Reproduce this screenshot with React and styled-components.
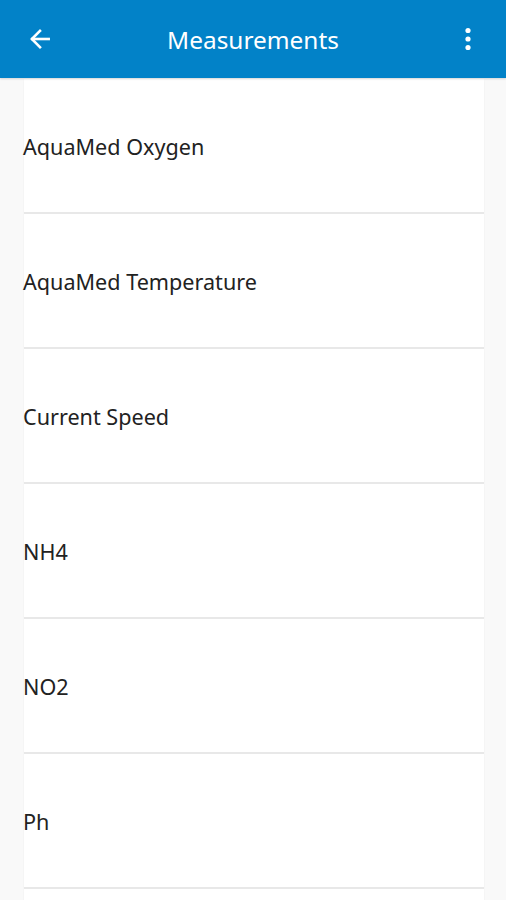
import React from "react";
import styled, { createGlobalStyle } from "styled-components";

const GlobalStyle = createGlobalStyle`
  body {
    margin: 0;
    background: #f9f9f9;
    font-family: "Noto Sans", "Open Sans", sans-serif;
  }
`;

const Page = styled.div`
  width: 506px;
  height: 900px;
  overflow: hidden;
  background: #f9f9f9;
`;

const Toolbar = styled.div`
  height: 78px;
  background: #0282c8;
  display: flex;
  align-items: center;
  padding: 0 24px 0 26px;
  box-sizing: border-box;
  box-shadow: 0 1px 2px rgba(0, 0, 0, 0.15);
  position: relative;
`;

const IconButton = styled.div`
  width: 28px;
  height: 28px;
  display: flex;
  align-items: center;
  justify-content: center;
`;

const Title = styled.h1`
  flex: 1;
  margin: 0;
  text-align: center;
  color: #fff;
  font-size: 24.4px;
  font-weight: 400;
  padding-right: 2px;
`;

const List = styled.div`
  margin: 1px 22px 0 24px;
  display: flex;
  flex-direction: column;
`;

const Row = styled.div`
  height: 131px;
  background: #fff;
  display: flex;
  align-items: center;
  padding-bottom: 2px;
  box-sizing: content-box;
  border-bottom: 2px solid #e8e8e8;
  box-shadow: 0 1px 2px rgba(0, 0, 0, 0.05);
`;

const Label = styled.span`
  font-size: 21.6px;
  color: #222;
  margin: 3px 0 0 -1px;
`;

const items = [
  "AquaMed Oxygen",
  "AquaMed Temperature",
  "Current Speed",
  "NH4",
  "NO2",
  "Ph",
];

export default function App() {
  return (
    <Page>
      <GlobalStyle />
      <Toolbar>
        <IconButton>
          <svg width="26" height="26" viewBox="0 0 24 24" fill="none" stroke="#fff" strokeWidth="2.4" strokeLinecap="square">
            <path d="M20 12H5" />
            <path d="M12 4.5L4.5 12l7.5 7.5" />
          </svg>
        </IconButton>
        <Title>Measurements</Title>
        <IconButton>
          <svg width="8" height="24" viewBox="0 0 8 24" fill="#fff">
            <circle cx="4" cy="3.5" r="2.6" />
            <circle cx="4" cy="12" r="2.6" />
            <circle cx="4" cy="20.5" r="2.6" />
          </svg>
        </IconButton>
      </Toolbar>
      <List>
        {items.map((name) => (
          <Row key={name}>
            <Label>{name}</Label>
          </Row>
        ))}
        <Row />
      </List>
    </Page>
  );
}
